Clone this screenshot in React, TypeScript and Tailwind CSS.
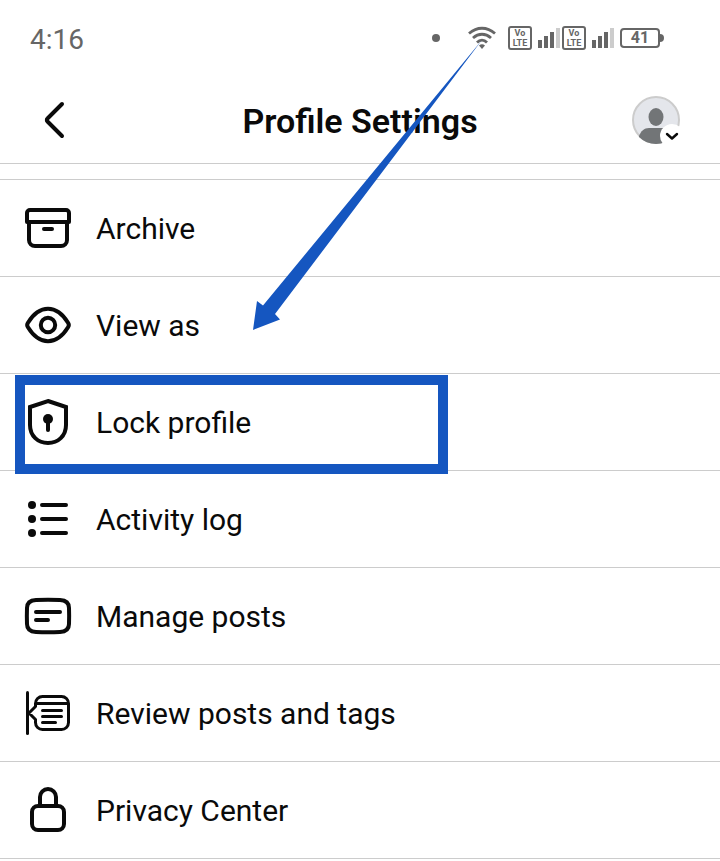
import type { ReactNode } from "react";

function Icon({ children }: { children: ReactNode }) {
  return (
    <svg
      viewBox="0 0 48 48"
      fill="none"
      stroke="currentColor"
      strokeWidth="4"
      strokeLinecap="round"
      strokeLinejoin="round"
      className="h-12 w-12 shrink-0"
      aria-hidden="true"
    >
      {children}
    </svg>
  );
}

const items = [
  {
    label: "Archive",
    icon: (
      <Icon>
        <path d="M5 18H3V9a3 3 0 0 1 3-3h36a3 3 0 0 1 3 3v9H5v18a6 6 0 0 0 6 6h26a6 6 0 0 0 6-6V18" />
        <path d="M20 25h8" />
      </Icon>
    ),
  },
  {
    label: "View as",
    icon: (
      <Icon>
        <path d="M3.8 22C9 13.5 16 7.8 24 7.8S39 13.5 44.2 22a3.8 3.8 0 0 1 0 4C39 34.5 32 40.2 24 40.2S9 34.5 3.8 26a3.8 3.8 0 0 1 0-4z" />
        <circle cx="24" cy="24" r="7.2" />
      </Icon>
    ),
  },
  {
    label: "Lock profile",
    highlighted: true,
    icon: (
      <Icon>
        <path strokeLinejoin="miter" d="M24 3 42 9v18c0 11-8 18-18 18S6 38 6 27V9z" />
        <circle cx="24" cy="21" r="5" fill="currentColor" stroke="none" />
        <path d="M24 22v10" />
      </Icon>
    ),
  },
  {
    label: "Activity log",
    icon: (
      <Icon>
        <g fill="currentColor" stroke="none">
          <circle cx="8" cy="10" r="4" />
          <circle cx="8" cy="24" r="4" />
          <circle cx="8" cy="38" r="4" />
        </g>
        <path d="M18 10h24M18 24h24M18 38h24" />
      </Icon>
    ),
  },
  {
    label: "Manage posts",
    icon: (
      <Icon>
        <path d="M12 8q12-.5 24 0c6 .3 9 3 9 8q.3 8 0 16c0 5-3 7.7-9 8q-12 .5-24 0c-6-.3-9-3-9-8q-.3-8 0-16c0-5 3-7.700 9-8z" />
        <path d="M12 20h24M12 28h12" />
      </Icon>
    ),
  },
  {
    label: "Review posts and tags",
    icon: (
      <Icon>
        <g strokeWidth="3">
          <path d="M3.5 3.5v41" />
          <path d="M11.5 14.5v3l-6.500 6.500 6.500 6.500v3a7 7 0 0 0 7 7h19a7 7 0 0 0 7-7v-19a7 7 0 0 0-7-7h-19a7 7 0 0 0-7 7h33" />
          <path d="M18.5 21.500h19M18.500 27.500h19M18.500 33.500h13" />
        </g>
      </Icon>
    ),
  },
  {
    label: "Privacy Center",
    icon: (
      <Icon>
        <path d="M16 20v-9a8 8 0 0 1 16 0v9" />
        <rect x="8" y="20" width="32" height="24" rx="6" />
      </Icon>
    ),
  },
];

function Sim() {
  return (
    <div className="flex items-end gap-1.5">
      <div className="flex h-6 w-6 flex-col items-center justify-center rounded-[3px] border-2 border-[#666] text-[9px] font-bold leading-[10px]">
        <span>Vo</span>
        <span>LTE</span>
      </div>
      <div className="mb-0.5 flex items-end gap-0.5">
        <span className="h-2 w-1 bg-[#666]" />
        <span className="h-3 w-1 bg-[#666]" />
        <span className="h-4 w-1 bg-[#666]" />
        <span className="h-5 w-1 bg-[#ccc]" />
      </div>
    </div>
  );
}

function StatusBar() {
  return (
    <div className="flex h-19 items-center justify-between pl-[30px] pr-14 text-[#666]">
      <span className="pt-1 text-[28px] leading-8">4:16</span>
      <div className="flex items-center">
        <span className="mr-7 h-2 w-2 rounded-full bg-[#666]" />
        <svg viewBox="0 0 28 24" fill="none" stroke="currentColor" strokeWidth="2.8" className="mr-3 h-6 w-7" aria-hidden="true">
          <path d="M1 7.500c8-7 18-7 26 0M5 12c5.500-5 12.500-5 18 0M9 16.500c3-3 7-3 10 0" />
          <path d="M11 19.500q3-2.500 6 0l-3 3.500z" fill="currentColor" stroke="none" />
        </svg>
        <div className="flex gap-0.5">
          <Sim />
          <Sim />
        </div>
        <div className="ml-1.5 flex items-center">
          <span className="flex h-5 w-10 items-center justify-center rounded-[4px] border-2 border-[#666] text-base font-bold leading-4">
            41
          </span>
          <span className="h-2 w-1 rounded-r-full bg-[#666]" />
        </div>
      </div>
    </div>
  );
}

function Header() {
  return (
    <header className="grid h-22 grid-cols-[1fr_auto_1fr] items-center border-b border-[#ccc] px-10">
      <button type="button" aria-label="Back" className="w-8">
        <svg viewBox="0 0 32 40" fill="none" stroke="currentColor" strokeWidth="4" strokeLinecap="round" strokeLinejoin="round" className="h-10 w-8">
          <path d="M22 4 7.500 18.500a2 2 0 0 0 0 3L22 36" />
        </svg>
      </button>
      <h1 className="pt-0.5 text-[34px] font-semibold leading-10">Profile Settings</h1>
      <button type="button" aria-label="Switch profile" className="justify-self-end">
        <svg viewBox="0 0 48 48" className="h-12 w-12">
          <clipPath id="avatar">
            <circle cx="24" cy="24" r="24" />
          </clipPath>
          <circle cx="24" cy="24" r="23" fill="#e4e6eb" stroke="#ccc" strokeWidth="2" />
          <g clipPath="url(#avatar)" fill="#727577">
            <ellipse cx="24" cy="21" rx="7.5" ry="9" />
            <path d="M7 40c2-5 5-8 10-8h14c5 0 8 3 10 8v8H7z" />
          </g>
          <circle cx="40" cy="40" r="12" fill="#fff" />
          <path d="m35 38 5 4.500 5-4.500" fill="none" stroke="#0a0a0a" strokeWidth="2.4" strokeLinecap="round" strokeLinejoin="round" />
        </svg>
      </button>
    </header>
  );
}

export default function App() {
  return (
    <main className="relative min-h-screen overflow-hidden bg-white font-['Roboto',sans-serif] text-[#0a0a0a]">
      <StatusBar />
      <Header />
      <ul className="mt-[15px] border-t border-[#ccc]">
        {items.map((item) => (
          <li key={item.label} className="relative border-b border-[#ccc]">
            <button type="button" className="flex h-24 w-full items-center gap-6 px-6 text-left text-[30px] leading-10">
              {item.icon}
              <span className="pt-0.5">{item.label}</span>
            </button>
            {item.highlighted && (
              <div className="pointer-events-none absolute left-[15px] top-px z-10 h-[99px] w-[433px] border-10 border-[#1556c0]" />
            )}
          </li>
        ))}
      </ul>

      {/* Arrow pointing down at the highlighted row */}
      <svg
        viewBox="0 0 230 290"
        className="pointer-events-none absolute left-[253px] top-10 h-[290px] w-[230px]"
        aria-hidden="true"
      >
        <path d="M229 0 22 274l5 5.500L0 290l4-29 6 4.500z" fill="#1556c0" />
      </svg>
    </main>
  );
}
